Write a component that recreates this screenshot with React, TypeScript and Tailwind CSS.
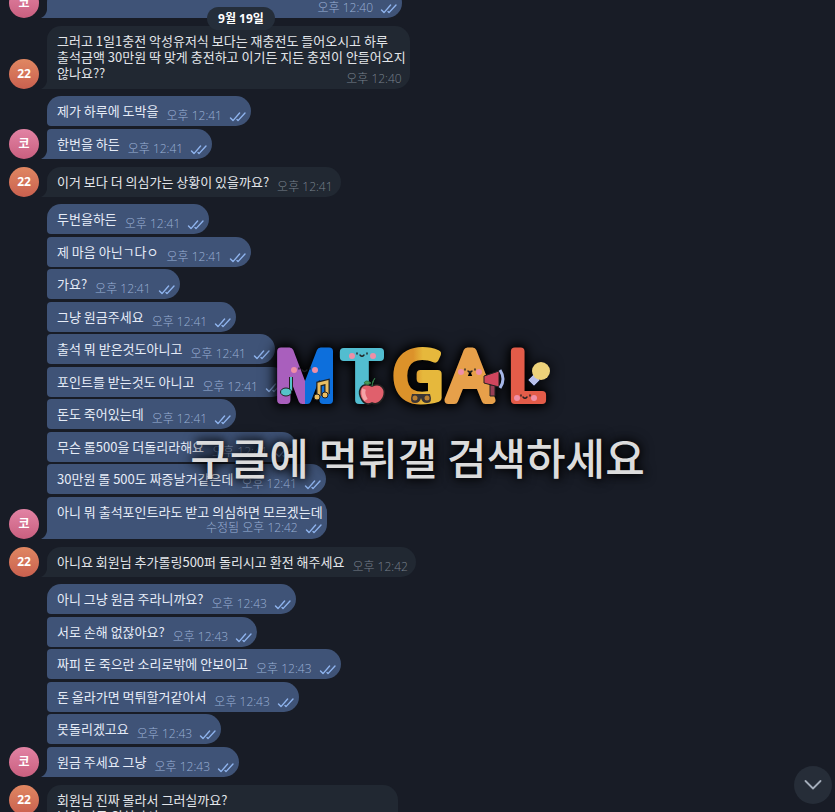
type Message = { text: string; time?: string; edited?: boolean };
type Group = { from: 'me' | 'guest'; messages: Message[]; avatarTop?: boolean };

const opening: Group = { from: 'me', messages: [{ text: '', time: '오후 12:40' }] };

const groups: Group[] = [
  {
    from: 'guest',
    messages: [
      {
        text: '그러고 1일1충전 악성유저식 보다는 재충전도 들어오시고 하루\n출석금액 30만원 딱 맞게 충전하고 이기든 지든 충전이 안들어오지\n않나요??',
        time: '오후 12:40',
      },
    ],
  },
  {
    from: 'me',
    messages: [
      { text: '제가 하루에 도박을', time: '오후 12:41' },
      { text: '한번을 하든', time: '오후 12:41' },
    ],
  },
  { from: 'guest', messages: [{ text: '이거 보다 더 의심가는 상황이 있을까요?', time: '오후 12:41' }] },
  {
    from: 'me',
    messages: [
      { text: '두번을하든', time: '오후 12:41' },
      { text: '제 마음 아닌ㄱ다ㅇ', time: '오후 12:41' },
      { text: '가요?', time: '오후 12:41' },
      { text: '그냥 원금주세요', time: '오후 12:41' },
      { text: '출석 뭐 받은것도아니고', time: '오후 12:41' },
      { text: '포인트를 받는것도 아니고', time: '오후 12:41' },
      { text: '돈도 죽어있는데', time: '오후 12:41' },
      { text: '무슨 롤500을 더돌리라해요', time: '오후 12:41' },
      { text: '30만원 롤 500도 짜증날거같은데', time: '오후 12:41' },
      { text: '아니 뭐 출석포인트라도 받고 의심하면 모르겠는데', time: '오후 12:42', edited: true },
    ],
  },
  { from: 'guest', messages: [{ text: '아니요 회원님 추가롤링500퍼 돌리시고 환전 해주세요', time: '오후 12:42' }] },
  {
    from: 'me',
    messages: [
      { text: '아니 그냥 원금 주라니까요?', time: '오후 12:43' },
      { text: '서로 손해 없잖아요?', time: '오후 12:43' },
      { text: '짜피 돈 죽으란 소리로밖에 안보이고', time: '오후 12:43' },
      { text: '돈 올라가면 먹튀할거같아서', time: '오후 12:43' },
      { text: '못돌리겠고요', time: '오후 12:43' },
      { text: '원금 주세요 그냥', time: '오후 12:43' },
    ],
  },
  {
    from: 'guest',
    avatarTop: true,
    messages: [{ text: '회원님 진짜 몰라서 그러실까요?\n님이 지금 의심가서' }],
  },
];

function Ticks() {
  return (
    <svg aria-hidden="true" viewBox="0 0 18 11" className="h-[11px] w-[18px] shrink-0" fill="none" stroke="#8fb4ee" strokeWidth="1.4" strokeLinecap="round" strokeLinejoin="round">
      <path d="M1.500 7 4 9.600 10.600 2" />
      <path d="M8 8.600 9 9.600 16 2" />
    </svg>
  );
}

function Avatar({ from }: { from: Group['from'] }) {
  const me = from === 'me';
  return (
    <span
      className={
        'flex size-[30px] shrink-0 items-center justify-center rounded-full bg-linear-to-b text-xs font-bold text-white ' +
        (me ? 'from-[#e283a4] to-[#c95f7f]' : 'from-[#e08762] to-[#c9604f]')
      }
    >
      {me ? '코' : '22'}
    </span>
  );
}

function Tail({ me }: { me: boolean }) {
  return (
    <svg aria-hidden="true" viewBox="0 0 8 12" className={'absolute bottom-0 -left-1.5 h-3 w-2 ' + (me ? 'text-[#3f5377]' : 'text-[#212832]')}>
      <path d="M6 0v4Q5.500 9 0 12H8V0Z" fill="currentColor" />
    </svg>
  );
}

function Stamp({ message, me }: { message: Message; me: boolean }) {
  return (
    <span className={'flex shrink-0 items-center gap-[7px] text-xs leading-4 font-light ' + (me ? 'text-[#9aafd4]' : 'text-[#77808c]')}>
      <time>{(message.edited ? '수정됨 ' : '') + message.time}</time>
      {me && <Ticks />}
    </span>
  );
}

function Bubble({ message, me, first, last }: { message: Message; me: boolean; first: boolean; last: boolean }) {
  const multiline = message.text.includes('\n');
  const shape = (first ? 'rounded-tl-[14px] ' : 'rounded-tl-sm ') + (last ? 'rounded-bl-none ' : 'rounded-bl-sm ');
  const tone = me ? 'bg-[#3f5377] text-[#e6ecf7] ' : 'bg-[#212832] text-[#e3e6ea] ';
  let flow = 'w-fit gap-2 h-[30px] ' + (me ? 'pr-1 ' : 'pr-2 ');
  if (message.edited) flow = 'w-fit flex-col pr-1 pb-[3px] ';
  if (multiline) flow = message.time ? 'w-fit pr-1 pb-2 ' : 'w-[351px] pb-2 ';
  if (!message.text) flow = 'h-[30px] w-[355px] justify-end pr-1 ';
  return (
    <div className={'relative flex rounded-r-[15px] pt-[7px] pl-2.5 ' + shape + tone + flow}>
      {message.text && (
        <p className="font-['Noto_Sans_CJK_KR',sans-serif] text-[13px] leading-4 whitespace-pre">{message.text}</p>
      )}
      {message.time && (
        <div className={multiline ? 'absolute right-2 bottom-0.5' : message.edited ? 'self-end' : 'pt-[5px]'}>
          <Stamp message={message} me={me} />
        </div>
      )}
      {last && <Tail me={me} />}
    </div>
  );
}

function MessageGroup({ group }: { group: Group }) {
  const me = group.from === 'me';
  return (
    <li className={'flex gap-2 pl-[9px] ' + (me ? 'mt-[7px] ' : 'mt-2 ') + (group.avatarTop ? 'items-start' : 'items-end')}>
      <Avatar from={group.from} />
      <div className="flex flex-col [&>*:nth-child(even)]:mt-[3px] [&>*:nth-child(odd):not(:first-child)]:mt-0.5">
        {group.messages.map((message, i) => (
          <Bubble key={i} message={message} me={me} first={i === 0} last={i === group.messages.length - 1} />
        ))}
      </div>
    </li>
  );
}

function Logo() {
  return (
    <svg
      role="img"
      aria-label="MTGAL"
      viewBox="0 0 290 70"
      className="h-[70px] w-[290px] overflow-visible font-['Open_Sans',sans-serif] text-[68px] font-normal drop-shadow-[0_0_7px_#000]"
    >
      <defs>
        <linearGradient id="m">
          <stop offset=".5" stopColor="#a95fbd" />
          <stop offset=".5" stopColor="#0d6fdc" />
        </linearGradient>
        <linearGradient id="g">
          <stop offset=".4" stopColor="#dc922a" />
          <stop offset=".6" stopColor="#e6b83c" />
        </linearGradient>
      </defs>
      <g strokeWidth="8" strokeLinejoin="round" textAnchor="middle" filter="drop-shadow(0 0 4px #000)">
        <text x="32" y="58" fill="url(#m)" stroke="url(#m)">M</text>
        <text x="89" y="58" fill="#52bdd0" stroke="#52bdd0">T</text>
        <text x="145" y="58" fill="url(#g)" stroke="url(#g)">G</text>
        <text x="197" y="58" fill="#e7a04a" stroke="#e7a04a">A</text>
        <text x="253" y="58" fill="#e35c49" stroke="#e35c49">L</text>
      </g>
      <g fill="#ef8fa6">
        <circle cx="21" cy="28" r="3" /><circle cx="42" cy="28" r="3" />
        <circle cx="79" cy="14" r="3" /><circle cx="100" cy="14" r="3" />
        <circle cx="188" cy="30" r="3" /><circle cx="206" cy="30" r="3" />
        <circle cx="244" cy="56" r="3" /><circle cx="261" cy="56" r="3" />
      </g>
      <g fill="none" stroke="#222" strokeWidth="1.4" strokeLinecap="round">
        <path d="M26 26v1M37 26v1M29 28q2.500 3 5 0M84 11v1M94 11v1M87 13q2 2.500 4 0M192 27v1M202 27v1M195 29q2 2.500 4 0M248 53v1M257 53v1M250 55q2 2.500 4 0" />
      </g>
      <path d="M18 35v14" stroke="#222" strokeWidth="4" />
      <path d="M18 35v14" stroke="#55c4c9" strokeWidth="2" />
      <ellipse cx="13" cy="50" rx="5.500" ry="4" fill="#55c4c9" stroke="#222" />
      <path d="M46 54V42l8-2v12" fill="none" stroke="#222" strokeWidth="5.500" />
      <path d="M46 54V42l8-2v12" fill="none" stroke="#e9bd62" strokeWidth="3" />
      <circle cx="44" cy="55" r="3" fill="#e9bd62" stroke="#222" /><circle cx="52" cy="53" r="3" fill="#e9bd62" stroke="#222" />
      <g transform="translate(-4 1)">
        <path d="M103 43c-12-5-15 6-10 14 4 6 8 4 10 3 4 2 8 0 11-5 4-9-2-16-11-12Z" fill="#e0606c" stroke="#222" strokeWidth="1.500" />
        <path d="M95 46q-2 5 2 11" fill="none" stroke="#f4a3a6" strokeWidth="4" />
        <path d="M103 43q0-5 3-8M102 40q-5-4-7 0 3 3 7 0Z" fill="#4b9a58" stroke="#2e7a46" />
      </g>
      <path d="M139 52h18q3 9-3 9-5 0-6-5-1 5-6 5-6 0-3-9Z" fill="#3b3535" />
      <circle cx="142" cy="56" r="2.500" fill="#ba7f32" /><circle cx="154" cy="56" r="2.500" fill="#ba7f32" />
      <path d="M217 43h5v11h-5z" fill="#963e55" stroke="#222" />
      <path d="m211 34 15-5v16l-15-4Z" fill="#cf465e" stroke="#222" />
      <path d="M227 28q6 9 0 18" fill="none" stroke="#a6b7e8" strokeWidth="3" />
      <path d="m261 32 6 6-6 6-6-6Z" fill="#b8c0ea" stroke="#27304d" />
      <circle cx="268" cy="29" r="9" fill="#edd27a" />
    </svg>
  );
}

export default function App() {
  return (
    <main className="relative h-screen overflow-hidden bg-[#181c26] font-['Open_Sans','Noto_Sans_CJK_KR',sans-serif]">
      <ol className="-mt-[19px]">
        <MessageGroup group={opening} />
        {groups.map((group, i) => (
          <MessageGroup key={i} group={group} />
        ))}
      </ol>
      <h2 className="absolute top-[7px] left-[207px] flex h-[23px] w-[68px] items-center justify-center rounded-full bg-[#252e3a] text-xs font-bold text-white">
        9월 19일
      </h2>
      <div className="pointer-events-none absolute inset-x-0 top-[342px] flex flex-col items-center">
        <Logo />
        <p className="mt-3 font-['Noto_Sans_CJK_KR',sans-serif] text-[43px] leading-16 font-medium whitespace-nowrap text-[#dcdcdc] [text-shadow:0_0_8px_#000,0_0_14px_#000]">
          구글에 먹튀갤 검색하세요
        </p>
      </div>
      <button type="button" aria-label="맨 아래로" className="absolute right-[3px] bottom-2 flex size-[38px] items-center justify-center rounded-full bg-[#262d38]">
        <svg aria-hidden="true" viewBox="0 0 18 10" className="h-2.5 w-[18px]" fill="none" stroke="#a4adba" strokeWidth="1.8" strokeLinecap="round" strokeLinejoin="round">
          <path d="m1.500 1 7.500 7.500L16.500 1" />
        </svg>
      </button>
    </main>
  );
}
